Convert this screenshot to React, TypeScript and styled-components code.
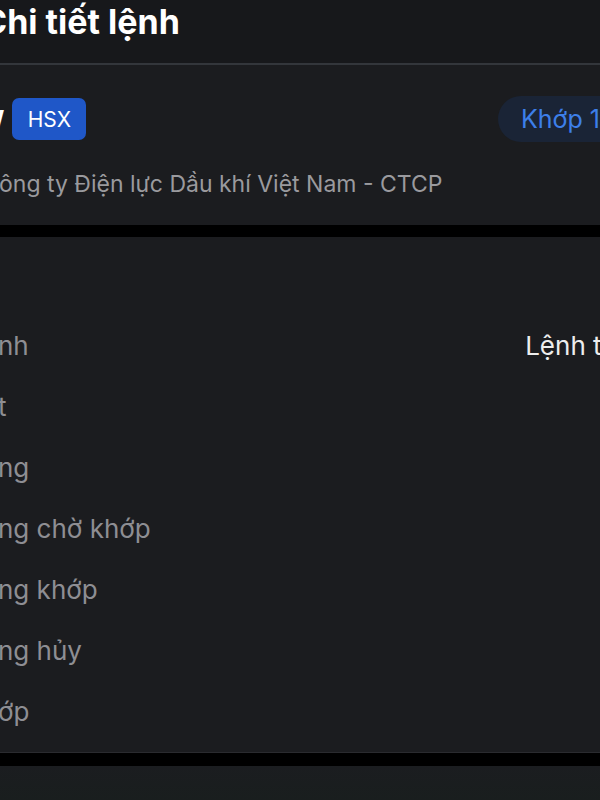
import React from "react";
import styled, { createGlobalStyle } from "styled-components";

const GlobalStyle = createGlobalStyle`
  html, body {
    margin: 0;
    padding: 0;
    background: #000;
  }
  body {
    font-family: Inter, "Noto Sans", "Liberation Sans", sans-serif;
    -webkit-font-smoothing: antialiased;
  }
`;

const Screen = styled.div`
  width: 600px;
  height: 800px;
  overflow: hidden;
  display: flex;
  flex-direction: column;
  background: #000;
`;

const Header = styled.header`
  height: 63px;
  flex-shrink: 0;
  background: #17181b;
  border-bottom: 2px solid #33363b;
  display: flex;
  align-items: flex-start;
`;

const Title = styled.h1`
  margin: 0 0 0 -18px;
  padding-top: 2px;
  font-size: 34px;
  line-height: 40px;
  font-weight: 700;
  color: #fff;
  white-space: nowrap;
`;

const Card = styled.section<{ $height: number; $divider?: boolean }>`
  height: ${(p) => p.$height}px;
  flex-shrink: 0;
  background: #1b1c1f;
  box-sizing: border-box;
  border-bottom: ${(p) => (p.$divider ? "1px solid #2a2b2f" : "none")};
`;

const Inner = styled.div`
  width: 695px;
  box-sizing: border-box;
  padding-right: 16px;
`;

const TopRow = styled.div`
  margin-top: 31px;
  height: 46px;
  display: flex;
  align-items: center;
  justify-content: space-between;
`;

const SymbolGroup = styled.div`
  display: flex;
  align-items: center;
  gap: 8px;
`;

const Symbol = styled.span`
  margin-left: -54px;
  font-size: 24px;
  font-weight: 700;
  color: #fff;
`;

const Exchange = styled.span`
  width: 74px;
  height: 42px;
  border-radius: 7px;
  background: #1f57c8;
  color: #fff;
  font-size: 21px;
  display: flex;
  align-items: center;
  justify-content: center;
`;

const StatusPill = styled.span`
  height: 46px;
  padding: 0 23px;
  border-radius: 23px;
  background: #1a2436;
  color: #3d7fe9;
  font-size: 25px;
  display: flex;
  align-items: center;
  white-space: nowrap;
`;

const Company = styled.div`
  margin: 27px 0 0 -1px;
  font-size: 23px;
  line-height: 30px;
  color: #9a9a9e;
  white-space: nowrap;
`;

const Gap = styled.div<{ $h: number }>`
  height: ${(p) => p.$h}px;
  flex-shrink: 0;
  background: #000;
`;

const DetailList = styled.div`
  padding-top: 78px;
`;

const Row = styled.div`
  height: 61px;
  display: flex;
  align-items: center;
  justify-content: space-between;
`;

const Label = styled.span`
  margin-left: -2px;
  font-size: 26px;
  color: #8e8e93;
  white-space: nowrap;
`;

const Value = styled.span`
  font-size: 26px;
  color: #ededed;
  white-space: nowrap;
`;

const Footer = styled.div`
  flex: 1;
  background: linear-gradient(#1b1d20, #191e1e);
`;

const rows = [
  { label: "nh", value: "Lệnh thường" },
  { label: "t", value: "" },
  { label: "ng", value: "" },
  { label: "ng chờ khớp", value: "" },
  { label: "ng khớp", value: "" },
  { label: "ng hủy", value: "" },
  { label: "ớp", value: "" },
];

export default function App() {
  return (
    <>
      <GlobalStyle />
      <Screen>
        <Header>
          <Title>Chi tiết lệnh</Title>
        </Header>
        <Card $height={160}>
          <Inner>
            <TopRow>
              <SymbolGroup>
                <Symbol>POW</Symbol>
                <Exchange>HSX</Exchange>
              </SymbolGroup>
              <StatusPill>Khớp 100%</StatusPill>
            </TopRow>
            <Company>ông ty Điện lực Dầu khí Việt Nam - CTCP</Company>
          </Inner>
        </Card>
        <Gap $h={12} />
        <Card $height={516} $divider>
          <Inner>
            <DetailList>
              {rows.map((r) => (
                <Row key={r.label}>
                  <Label>{r.label}</Label>
                  <Value>{r.value}</Value>
                </Row>
              ))}
            </DetailList>
          </Inner>
        </Card>
        <Gap $h={13} />
        <Footer />
      </Screen>
    </>
  );
}
